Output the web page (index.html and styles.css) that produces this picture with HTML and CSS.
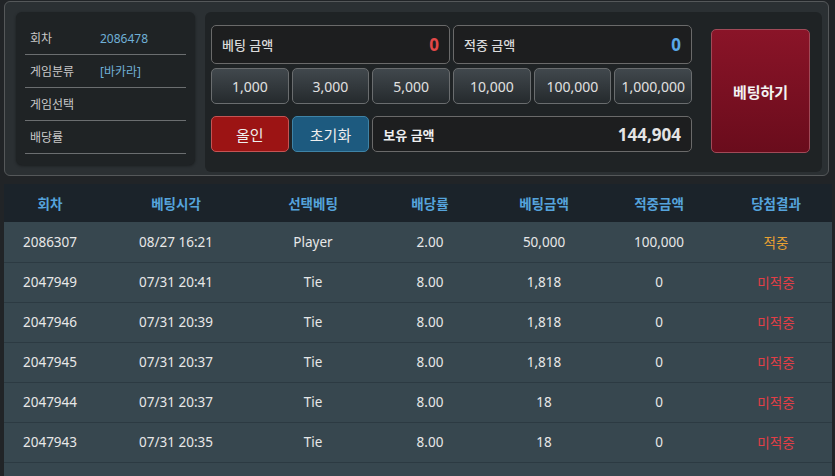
FILE: index.html
```html
<!DOCTYPE html>
<html lang="ko">
<head>
<meta charset="utf-8">
<link rel="stylesheet" href="styles.css">
</head>
<body>
<div class="top">
  <div class="info">
    <div class="irow"><span class="lbl">회차</span><span class="val">2086478</span></div>
    <div class="irow"><span class="lbl">게임분류</span><span class="val">[바카라]</span></div>
    <div class="irow"><span class="lbl">게임선택</span><span class="val"></span></div>
    <div class="irow"><span class="lbl">배당률</span><span class="val"></span></div>
  </div>
  <div class="bet">
    <div class="grid">
      <div class="box span3"><span class="blbl">베팅 금액</span><span class="num red">0</span></div>
      <div class="box span3"><span class="blbl">적중 금액</span><span class="num blue">0</span></div>
      <button class="amt">1,000</button>
      <button class="amt">3,000</button>
      <button class="amt">5,000</button>
      <button class="amt">10,000</button>
      <button class="amt">100,000</button>
      <button class="amt">1,000,000</button>
      <button class="act allin">올인</button>
      <button class="act reset">초기화</button>
      <div class="box span4 own"><span class="blbl strong">보유 금액</span><span class="num white">144,904</span></div>
    </div>
    <button class="go">베팅하기</button>
  </div>
</div>
<table class="hist">
  <colgroup>
    <col class="c1"><col class="c2"><col class="c3"><col class="c4"><col class="c5"><col class="c6"><col class="c7">
  </colgroup>
  <thead>
    <tr><th>회차</th><th>베팅시각</th><th>선택베팅</th><th>배당률</th><th>베팅금액</th><th>적중금액</th><th>당첨결과</th></tr>
  </thead>
  <tbody>
    <tr><td>2086307</td><td>08/27 16:21</td><td>Player</td><td>2.00</td><td>50,000</td><td>100,000</td><td class="win">적중</td></tr>
    <tr><td>2047949</td><td>07/31 20:41</td><td>Tie</td><td>8.00</td><td>1,818</td><td>0</td><td class="lose">미적중</td></tr>
    <tr><td>2047946</td><td>07/31 20:39</td><td>Tie</td><td>8.00</td><td>1,818</td><td>0</td><td class="lose">미적중</td></tr>
    <tr><td>2047945</td><td>07/31 20:37</td><td>Tie</td><td>8.00</td><td>1,818</td><td>0</td><td class="lose">미적중</td></tr>
    <tr><td>2047944</td><td>07/31 20:37</td><td>Tie</td><td>8.00</td><td>18</td><td>0</td><td class="lose">미적중</td></tr>
    <tr><td>2047943</td><td>07/31 20:35</td><td>Tie</td><td>8.00</td><td>18</td><td>0</td><td class="lose">미적중</td></tr>
    <tr><td>2047942</td><td>07/31 20:33</td><td>Tie</td><td>8.00</td><td>18</td><td>0</td><td class="lose">미적중</td></tr>
  </tbody>
</table>
</body>
</html>
```
FILE: styles.css
```css
* { box-sizing: border-box; }
html, body { margin: 0; padding: 0; }
body {
  background: #212427;
  font-family: "Noto Sans", "Noto Sans CJK KR", sans-serif;
  color: #ddd;
  width: 835px;
  height: 476px;
  overflow: hidden;
}
.top {
  margin: 1px 6px 0 4px;
  height: 175px;
  border: 1px solid #55585a;
  border-radius: 6px;
  background: #2b3033;
  display: flex;
  align-items: flex-start;
  padding: 10px 6px 0 11px;
  gap: 10px;
}
.info {
  width: 179px;
  height: 153px;
  background: #1f2325;
  border-radius: 6px;
  padding: 10px 9px 0;
  box-shadow: 0 1px 3px rgba(0,0,0,.4);
}
.irow {
  height: 33px;
  border-bottom: 1px solid #6b6e70;
  display: flex;
  align-items: center;
  padding-left: 5px;
  font-size: 12px;
}
.lbl { width: 70px; color: #c9c9c9; }
.val { color: #6fb0d6; }
.bet {
  flex: 1;
  height: 160px;
  background: #1f2325;
  border-radius: 6px;
  display: flex;
  align-items: flex-start;
  padding: 13px 12px 0 6px;
  gap: 19px;
}
.grid {
  width: 481px;
  display: grid;
  grid-template-columns: repeat(6, 1fr);
  grid-template-rows: 39px 36px 44px;
  column-gap: 3px;
  row-gap: 4px;
}
.grid .act, .grid .own { margin-top: 8px; }
.span3 { grid-column: span 3; }
.span4 { grid-column: span 4; }
.box {
  background: #1d1e1f;
  border: 1px solid #6a6a6a;
  border-radius: 5px;
  display: flex;
  align-items: center;
  justify-content: space-between;
  padding: 0 10px;
}
.blbl { font-size: 13px; color: #dadada; font-weight: 500; }
.blbl.strong { font-weight: bold; color: #eee; }
.num { font-size: 17px; font-weight: bold; }
.num.red { color: #e24848; }
.num.blue { color: #5aa8e8; }
.num.white { color: #e4e4e4; }
button {
  font-family: inherit;
  cursor: pointer;
}
.amt {
  background: linear-gradient(#41484d, #252a2d);
  border: 1px solid #6a6d6f;
  border-radius: 5px;
  color: #e0e0e0;
  font-size: 14px;
  padding: 0;
}
.act {
  border-radius: 5px;
  color: #eee;
  font-size: 15px;
  padding: 0;
}
.allin { background: #9c1414; border: 1px solid #c45454; }
.reset { background: #1d5a7f; border: 1px solid #3f83a6; }
.go {
  margin-top: 4px;
  width: 99px;
  height: 124px;
  border: 1px solid #a04a58;
  border-radius: 5px;
  background: linear-gradient(#8a1428, #6a0c1c);
  color: #f2f2f2;
  font-size: 15px;
  font-weight: bold;
  padding: 0;
}
.hist {
  margin: 8px 0 0 4px;
  width: 828px;
  border-collapse: collapse;
  table-layout: fixed;
  font-size: 13.5px;
}
.c1 { width: 92px; }
.c2 { width: 160px; }
.c3 { width: 114px; }
.c4 { width: 120px; }
.c5 { width: 108px; }
.c6 { width: 122px; }
.c7 { width: 112px; }
.hist th {
  height: 38px;
  background: #1b232a;
  color: #55a3dc;
  font-weight: bold;
  text-align: center;
  padding: 0;
}
.hist td {
  height: 40px;
  background: #37474f;
  border-top: 1px solid #2c3a42;
  color: #e8e8e8;
  text-align: center;
  padding: 0;
}
.hist tbody tr:first-child td { border-top: none; }
.hist td.win { color: #e8a032; }
.hist td.lose { color: #e33e46; }
```
